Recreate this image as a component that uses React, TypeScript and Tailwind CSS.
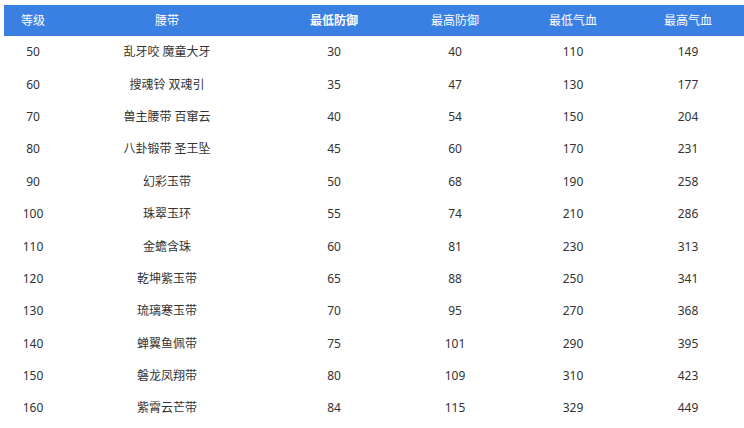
import React from "react";

const rows: [string, string, string, string, string, string][] = [
  ["50", "乱牙咬 魔童大牙", "30", "40", "110", "149"],
  ["60", "搜魂铃 双魂引", "35", "47", "130", "177"],
  ["70", "兽主腰带 百窜云", "40", "54", "150", "204"],
  ["80", "八卦锻带 圣王坠", "45", "60", "170", "231"],
  ["90", "幻彩玉带", "50", "68", "190", "258"],
  ["100", "珠翠玉环", "55", "74", "210", "286"],
  ["110", "金蟾含珠", "60", "81", "230", "313"],
  ["120", "乾坤紫玉带", "65", "88", "250", "341"],
  ["130", "琉璃寒玉带", "70", "95", "270", "368"],
  ["140", "蝉翼鱼佩带", "75", "101", "290", "395"],
  ["150", "磐龙凤翔带", "80", "109", "310", "423"],
  ["160", "紫霄云芒带", "84", "115", "329", "449"],
];

const widths = ["w-[58px]", "w-[210px]", "w-[124px]", "w-[118px]", "w-[118px]", "w-[112px]"];
const headers = ["等级", "腰带", "最低防御", "最高防御", "最低气血", "最高气血"];

export default function App() {
  return (
    <div
      className="w-[744px] h-[428px] bg-white overflow-hidden pt-[5px] pl-[4px]"
      style={{ fontFamily: '"Noto Sans", "Noto Sans CJK SC", sans-serif' }}
    >
      <div className="flex h-[31px] bg-[#3a80e2] text-white text-[12px] items-center">
        {headers.map((h, i) => (
          <div key={h} className={`${widths[i]} text-center ${i === 2 ? "font-bold" : ""}`}>
            {h}
          </div>
        ))}
      </div>
      {rows.map((r) => (
        <div key={r[0]} className="flex h-[32.4px] items-center text-[12px] text-[#333]">
          {r.map((c, i) => (
            <div key={i} className={`${widths[i]} text-center`}>
              {c}
            </div>
          ))}
        </div>
      ))}
    </div>
  );
}
